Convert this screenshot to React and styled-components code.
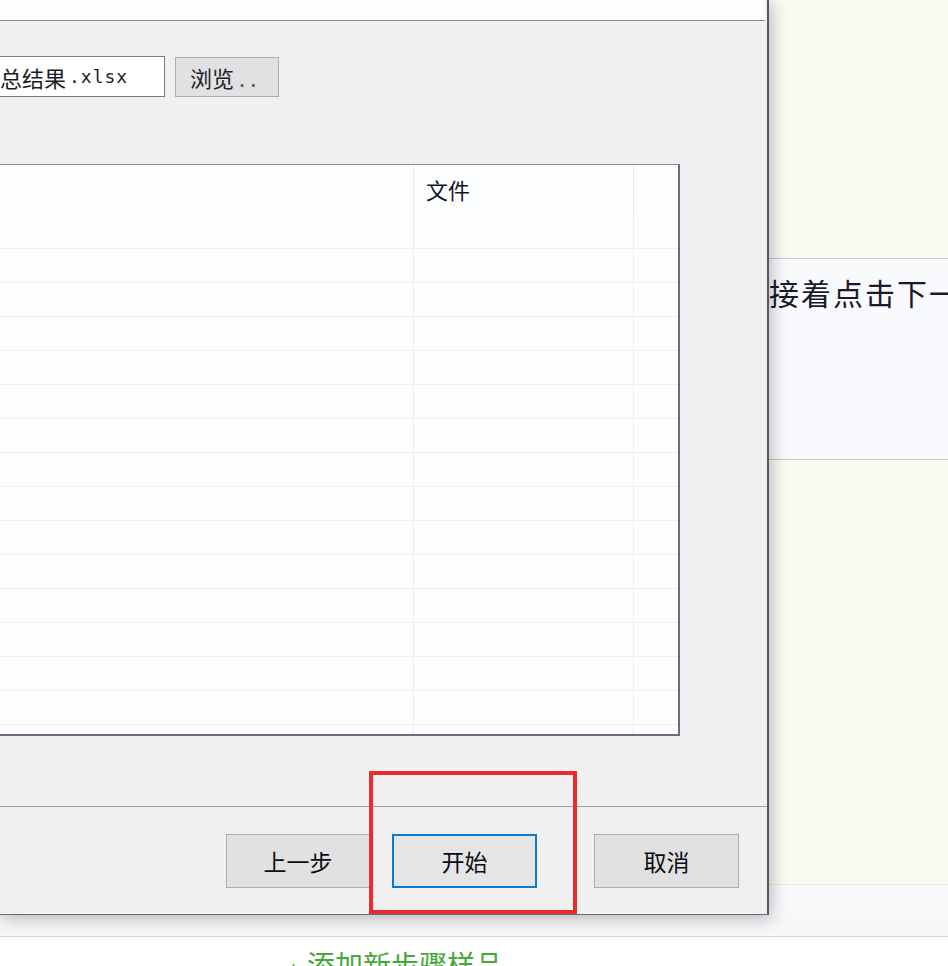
import React from "react";
import styled, { createGlobalStyle } from "styled-components";

const GlobalStyle = createGlobalStyle`
  html, body {
    margin: 0;
    padding: 0;
    background: #ffffff;
  }
  body {
    font-family: "Noto Sans CJK SC", "Noto Sans", sans-serif;
  }
`;

const BODY_ROWS = 16;

function App() {
  return (
    <Page>
      <GlobalStyle />
      <Upper>
        <Dialog>
          <DialogHeader />
          <DialogBody>
            <FileRow>
              <PathField>
                总结果<Ext>.xlsx</Ext>
              </PathField>
              <BrowseButton>
                浏览<Dots>..</Dots>
              </BrowseButton>
            </FileRow>
            <FileTable>
              <HeadCell $divider />
              <HeadCell $divider>文件</HeadCell>
              <HeadCell />
              {Array.from({ length: BODY_ROWS }).map((_, i) => (
                <React.Fragment key={i}>
                  <Cell $divider />
                  <Cell $divider />
                  <Cell />
                </React.Fragment>
              ))}
            </FileTable>
          </DialogBody>
          <DialogFooter>
            <ActionButton $width={144}>上一步</ActionButton>
            <Highlight $space={22}>
              <ActionButton $primary $width={145}>
                开始
              </ActionButton>
              <RedFrame />
            </Highlight>
            <ActionButton $width={145} $space={57}>
              取消
            </ActionButton>
          </DialogFooter>
        </Dialog>
        <SidePanel>
          <CreamBlock $height={258} />
          <NotePanel>接着点击下一步</NotePanel>
          <CreamBlock $grow />
          <SideBand />
        </SidePanel>
      </Upper>
      <LowerBand />
      <PageTail>
        <AddLink>
          <Plus>+</Plus>添加新步骤样品
        </AddLink>
      </PageTail>
    </Page>
  );
}

const Page = styled.div`
  width: 948px;
  height: 966px;
  overflow: hidden;
  display: flex;
  flex-direction: column;
  background: #ffffff;
`;

const Upper = styled.div`
  display: flex;
  height: 915px;
  flex-shrink: 0;
`;

const Dialog = styled.div`
  width: 767px;
  flex-shrink: 0;
  display: flex;
  flex-direction: column;
  background: #f0f0f1;
  border-right: 2px solid #58556a;
  border-bottom: 1px solid #6d6b78;
  position: relative;
  z-index: 1;
  box-shadow: 2px 3px 16px rgba(0, 0, 0, 0.28);
`;

const DialogHeader = styled.div`
  height: 20px;
  background: #fdfdfd;
  border-bottom: 1px solid #8e8e8e;
  margin-right: 2px;
`;

const DialogBody = styled.div`
  height: 785px;
  padding-top: 35px;
  box-sizing: border-box;
`;

const FileRow = styled.div`
  display: flex;
  align-items: center;
  gap: 10px;
  height: 41px;
`;

const PathField = styled.div`
  width: 165px;
  height: 41px;
  box-sizing: border-box;
  background: #ffffff;
  border: 1px solid #7a7a7e;
  border-left: none;
  display: flex;
  align-items: center;
  font-size: 22px;
  color: #1b1b26;
  white-space: nowrap;
  overflow: hidden;
`;

const Ext = styled.span`
  font-family: "DejaVu Sans Mono", "Liberation Mono", monospace;
  font-size: 18px;
  letter-spacing: 1px;
  margin-left: 3px;
`;

const BrowseButton = styled.div`
  width: 104px;
  height: 40px;
  margin-top: 1px;
  box-sizing: border-box;
  background: #e1e1e2;
  border: 1px solid #adadad;
  padding-left: 14px;
  display: flex;
  align-items: center;
  font-size: 22px;
  color: #222228;
`;

const Dots = styled.span`
  letter-spacing: 5px;
  margin-left: 5px;
  color: #55555c;
`;

const FileTable = styled.div`
  margin-top: 67px;
  width: 680px;
  height: 572px;
  box-sizing: border-box;
  background: #fdfeff;
  border-top: 1px solid #8a8a90;
  border-right: 2px solid #6f6c82;
  border-bottom: 2px solid #6f6c82;
  overflow: hidden;
  display: grid;
  grid-template-columns: 414px 220px 1fr;
  grid-template-rows: 50px;
  grid-auto-rows: 34px;
`;

const HeadCell = styled.div`
  border-right: ${(p) => (p.$divider ? "1px solid #e9ebee" : "none")};
  padding: 11px 0 0 12px;
  font-size: 22px;
  line-height: 1.2;
  color: #15151f;
`;

const Cell = styled.div`
  border-bottom: 1px solid #edf0f3;
  border-right: ${(p) => (p.$divider ? "1px solid #eceef1" : "none")};
`;

const DialogFooter = styled.div`
  flex: 1;
  display: flex;
  justify-content: flex-end;
  align-items: flex-start;
  padding: 27px 28px 0 0;
  border-top: 1px solid #a0a0a2;
`;

const ActionButton = styled.div`
  width: ${(p) => p.$width}px;
  height: 54px;
  box-sizing: border-box;
  margin-left: ${(p) => p.$space || 0}px;
  background: ${(p) => (p.$primary ? "#e5e5e6" : "#e1e1e2")};
  border: ${(p) => (p.$primary ? "2px solid #0a78d6" : "1px solid #adadad")};
  display: flex;
  align-items: center;
  justify-content: center;
  font-size: 23px;
  color: #0c0c12;
`;

const Highlight = styled.div`
  position: relative;
  margin-left: ${(p) => p.$space || 0}px;
`;

const RedFrame = styled.div`
  position: absolute;
  left: -23px;
  right: -40px;
  top: -63px;
  bottom: -26px;
  border: 4px solid #ea2a2c;
  pointer-events: none;
`;

const SidePanel = styled.div`
  flex: 1;
  min-width: 0;
  display: flex;
  flex-direction: column;
  overflow: hidden;
`;

const CreamBlock = styled.div`
  height: ${(p) => (p.$height ? `${p.$height}px` : "auto")};
  flex: ${(p) => (p.$grow ? 1 : "none")};
  background: #fafaf3;
`;

const NotePanel = styled.div`
  height: 202px;
  box-sizing: border-box;
  background: #f9fafd;
  border-top: 1px solid #c9c9cb;
  border-bottom: 1px solid #c9c9cb;
  padding-top: 14px;
  font-size: 30px;
  line-height: 1.3;
  letter-spacing: 2px;
  color: #1c1a2a;
  white-space: nowrap;
`;

const SideBand = styled.div`
  height: 30px;
  background: #f8f9fb;
  border-top: 1px solid #ebebe4;
`;

const LowerBand = styled.div`
  height: 21px;
  flex-shrink: 0;
  background: #f6f7f9;
  border-bottom: 1px solid #d6d6d8;
`;

const PageTail = styled.div`
  flex: 1;
  background: #ffffff;
  padding: 11px 0 0 288px;
`;

const AddLink = styled.div`
  font-size: 28px;
  line-height: 1.2;
  color: #45a83a;
  white-space: nowrap;
`;

const Plus = styled.span`
  font-size: 20px;
  margin-right: 8px;
`;

export default App;
